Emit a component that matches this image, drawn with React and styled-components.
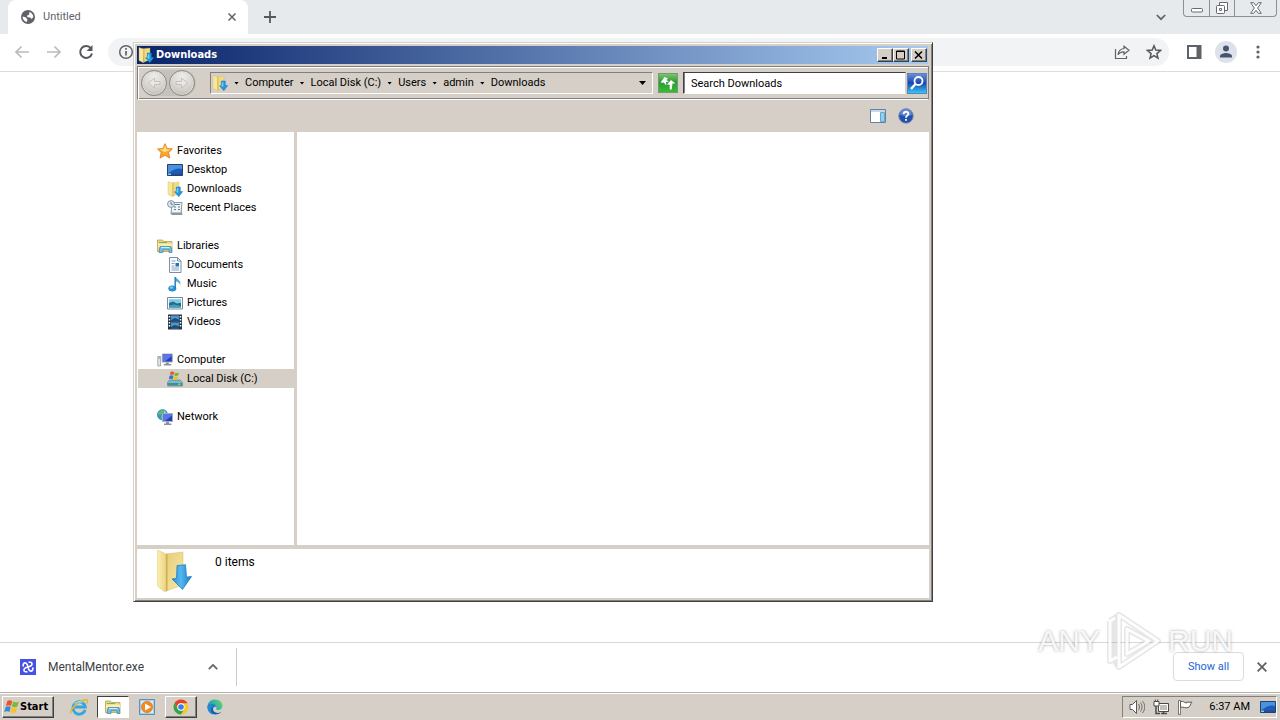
import React from "react";
import styled, { createGlobalStyle, css } from "styled-components";

const GlobalStyle = createGlobalStyle`
  * { box-sizing: border-box; }
  body {
    margin: 0;
    background: #fff;
    color: #000;
    font-family: Roboto, sans-serif;
    font-size: 11px;
    line-height: 16px;
  }
  button, input { font: inherit; color: inherit; margin: 0; }
  a { color: inherit; text-decoration: none; }
  svg { display: block; flex: none; }
`;

const face = "#d5cfc7";
const boldFont = css`
  font-family: "DejaVu Sans Condensed", "DejaVu Sans", sans-serif;
  font-weight: bold;
`;
const raised = css`
  border: 1px solid;
  border-color: #fff #404040 #404040 #fff;
  box-shadow: inset -1px -1px 0 #808080;
`;
const sunken = css`
  border: 1px solid;
  border-color: #808080 #fff #fff #808080;
`;

/* ---------- Desktop and browser ---------- */

const Desktop = styled.div`
  position: relative;
  display: flex;
  flex-direction: column;
  min-height: 100vh;
  overflow: hidden;
`;
const TabStrip = styled.header`
  display: flex;
  height: 34px;
  padding-left: 8px;
  background: #e7eaed;
`;
const Tab = styled.div`
  display: flex;
  align-items: center;
  gap: 7px;
  width: 240px;
  padding: 0 8px 0 12px;
  background: #fff;
  border-radius: 8px 8px 0 0;
  color: #5f6368;
`;
const TabTitle = styled.span`flex: 1;`;
const PlainButton = styled.button`
  display: flex;
  align-items: center;
  justify-content: center;
  width: ${(p) => p.$w || 16}px;
  height: ${(p) => p.$h || 16}px;
  padding: 0;
  border: 0;
  background: none;
  color: #5f6368;
`;
const Spacer = styled.div`flex: 1;`;
const NewTab = styled(PlainButton)`margin: 9px 0 0 14px;`;
const TabSearch = styled(PlainButton)`margin: 9px 14px 0 0;`;
const FrameButtons = styled.div`
  display: flex;
  height: 17px;
  margin-right: 3px;
  border: 1px solid #8c8f93;
  border-top: 0;
  border-radius: 0 0 4px 4px;
`;
const FrameButton = styled(PlainButton)`
  & + & { border-left: 1px solid #8c8f93; }
`;
const BrowserBar = styled.div`
  display: flex;
  align-items: center;
  height: 38px;
  padding: 0 14px 1px;
  border-bottom: 1px solid #dadce0;
  background: #fff;
`;
const NavButtons = styled.div`
  display: flex;
  gap: 16px;
  margin-right: 14px;
`;
const AddressPill = styled.div`
  flex: 1;
  display: flex;
  align-items: center;
  height: 28px;
  padding: 0 7px 0 10px;
  border-radius: 14px;
  background: #f1f3f4;
  color: #5f6368;
`;
const AddressInput = styled.input`
  flex: 1;
  min-width: 0;
  height: 20px;
  border: 0;
  outline: 0;
  background: none;
`;
const PillActions = styled.div`
  display: flex;
  gap: 16px;
`;
const BrowserActions = styled.div`
  display: flex;
  align-items: center;
  gap: 16px;
  margin: 0 0 0 17px;
`;
const Avatar = styled(PlainButton)`
  border-radius: 50%;
  background: #dde1ea;
  margin: 0 -3px;
`;
const PageArea = styled.main`
  flex: 1;
  min-height: 480px;
`;
const DownloadBar = styled.footer`
  display: flex;
  align-items: center;
  height: 50px;
  padding: 0 10px 2px 20px;
  border-top: 1px solid #d5d7da;
  background: #fff;
`;
const DownloadItem = styled.div`
  display: flex;
  align-items: center;
  width: 217px;
  height: 38px;
  gap: 12px;
  padding-right: 15px;
  border-right: 1px solid #c9cbce;
  color: #3c4043;
  font-size: 12px;
`;
const DownloadName = styled.a`flex: 1;`;
const ShowAll = styled.button`
  width: 71px;
  height: 29px;
  margin-right: 10px;
  padding: 0;
  border: 1px solid #dadce0;
  border-radius: 4px;
  background: #fff;
  color: #1a66d2;
`;

/* ---------- Explorer window ---------- */

const Window = styled.section`
  position: absolute;
  top: 42px;
  left: 133px;
  right: 347px;
  bottom: 118px;
  display: flex;
  flex-direction: column;
  padding: 2px 2px 1px 2px;
  border: 1px solid;
  border-color: #d5cfc7 #404040 #404040 #d5cfc7;
  background: ${face};
  box-shadow: inset 1px 1px 0 #fff, inset -1px -1px 0 #808080;
`;
const TitleBar = styled.div`
  display: flex;
  align-items: center;
  gap: 2px;
  height: 18px;
  margin: 1px 2px 2px 1px;
  padding: 0 1px;
  background: linear-gradient(90deg, #0a246a, #a6caf0);
  color: #fff;
`;
const Title = styled.h1`
  flex: 1;
  margin: 0;
  font-size: 11px;
  ${boldFont}
`;
const CaptionGroup = styled.div`
  display: flex;
  & > :last-child { margin-left: 2px; }
`;
const CaptionButton = styled.button`
  display: flex;
  align-items: center;
  justify-content: center;
  width: 16px;
  height: 14px;
  padding: 0;
  background: ${face};
  ${raised}
`;
const Rebar = styled.div`
  display: flex;
  align-items: center;
  height: 34px;
  margin: 0 1px;
  padding: 0 1px 0 3px;
  border: 1px solid;
  border-color: #808080 #808080 #fff #808080;
  box-shadow: inset 1px 1px 0 #fff, inset 0 -1px 0 #808080;
`;
const Travel = styled.div`
  display: flex;
  gap: 2px;
  margin-right: 14px;
  padding-right: 1px;
  border-radius: 13px;
  background: #c5c2bc;
`;
const TravelButton = styled.button`
  display: flex;
  align-items: center;
  justify-content: center;
  width: 26px;
  height: 26px;
  padding: 0;
  border: 1px solid #8a8882;
  border-radius: 50%;
  background: radial-gradient(circle at 50% 25%, #efeeec, #d3d0cb 60%, #b4b1aa);
  box-shadow: inset 0 0 0 1px #dddbd7;
`;
const Breadcrumbs = styled.nav`
  flex: 1;
  display: flex;
  align-items: center;
  height: 22px;
  margin-right: 5px;
  padding: 0 6px 0 1px;
  ${sunken}
`;
const Crumb = styled.a`
  display: flex;
  align-items: center;
  white-space: nowrap;
`;
const CrumbArrow = styled.span`
  width: 5px;
  height: 3px;
  margin: 0 6px;
  background: #000;
  clip-path: polygon(0 0, 100% 0, 50% 100%);
`;
const SearchInput = styled.input`
  width: 223px;
  height: 22px;
  margin-left: 5px;
  padding: 0 7px;
  border: 1px solid;
  border-color: #404040 #d5cfc7 #fff #404040;
  box-shadow: inset 1px 0 0 #808080;
  border-radius: 0;
  background: #fff;
  outline: 0;
  &::placeholder { color: #000; opacity: 1; }
`;
const CommandBar = styled.div`
  display: flex;
  align-items: center;
  justify-content: flex-end;
  gap: 12px;
  height: 32px;
  padding-right: 16px;
`;
const Panes = styled.div`
  flex: 1;
  display: flex;
  gap: 3px;
  min-height: 0;
  margin: 0 1px 4px;
`;
const NavPane = styled.nav`
  display: flex;
  flex-direction: column;
  gap: 19px;
  width: 157px;
  padding: 9px 0 0 1px;
  background: #fff;
`;
const Group = styled.div`
  display: flex;
  flex-direction: column;
`;
const TreeRow = styled.a`
  display: flex;
  align-items: center;
  gap: 4px;
  height: 19px;
  padding-left: ${(p) => (p.$child ? 29 : 19)}px;
  background: ${(p) => (p.$selected ? face : "transparent")};
  white-space: nowrap;
`;
const FilePane = styled.div`
  flex: 1;
  background: #fff;
`;
const DetailsPane = styled.div`
  display: flex;
  gap: 22px;
  height: 49px;
  margin: 0 1px 2px;
  padding: 1px 20px;
  background: #fff;
  font-size: 12px;
`;
const ItemCount = styled.span`padding-top: 4px;`;

/* ---------- Taskbar ---------- */

const Taskbar = styled.div`
  display: flex;
  align-items: center;
  height: 28px;
  padding: 1px 3px 0 2px;
  border-top: 1px solid #b3afa8;
  background: ${face};
  box-shadow: inset 0 1px 0 #fff;
`;
const StartButton = styled.button`
  display: flex;
  align-items: center;
  width: 52px;
  height: 22px;
  margin-right: 9px;
  padding: 0 1px;
  background: ${face};
  && { ${boldFont} }
  ${raised}
`;
const TaskButton = styled.button`
  display: flex;
  align-items: center;
  justify-content: center;
  width: 32px;
  height: 22px;
  margin-right: 2px;
  padding: 0;
  border: 1px solid transparent;
  background: ${face};
  ${(p) => p.$state === "open" && raised}
  ${(p) => p.$state === "active" && css`
    border-color: #404040 #fff #fff #404040;
    background: #fff;
  `}
`;
const Tray = styled.div`
  display: flex;
  align-items: center;
  gap: 8px;
  height: 22px;
  padding: 0 0 0 6px;
  ${sunken}
`;
const Clock = styled.time`
  margin-left: 8px;
  margin-right: 2px;
  white-space: nowrap;
`;

/* ---------- Watermark ---------- */

const Watermark = styled.div`
  position: absolute;
  right: 47px;
  bottom: 47px;
  display: flex;
  align-items: center;
  gap: 6px;
  color: rgba(255, 255, 255, 0.9);
  font-family: "Liberation Sans", sans-serif;
  font-size: 30px;
  line-height: 32px;
  text-shadow: 0 0 3px rgba(80, 80, 80, 0.5);
  pointer-events: none;
`;

/* ---------- Icons ---------- */

const Icon = ({ size = 16, w, h, box = "0 0 16 16", children }) => (
  <svg width={w || size} height={h || size} viewBox={box} fill="none" aria-hidden="true">
    {children}
  </svg>
);

const Cross = ({ size = 8 }) => (
  <Icon size={size} box="0 0 8 8">
    <path d="M.5.5l7 7M7.500.5l-7 7" stroke="#5f6368" strokeWidth="1.500" />
  </Icon>
);
const Globe = () => (
  <Icon>
    <circle cx="8" cy="8" r="7" fill="#5f6368" />
    <path d="M2.700 7.600C4 8 5.400 8 6.300 9l1.100 1.400-.4 2.600c-2.600-.3-4.500-2.600-4.300-5.400zM9.500 2.900c2.400.8 3.700 2.600 3.800 5.100l-1.600 1.900-1.500-1.500-2.800-.2-.3-1.600 2-.8.100-1.300z" fill="#fff" />
  </Icon>
);
const Arrow = ({ flip }) => (
  <Icon>
    <path d={flip ? "M1 8h13M8.500 2.500L14 8l-5.500 5.500" : "M15 8H2M7.500 2.500L2 8l5.500 5.500"} stroke="#b9bbbe" strokeWidth="1.700" />
  </Icon>
);
const Reload = () => (
  <Icon>
    <path d="M13 4.300A6 6 0 1 0 14 9.500" stroke="#55585c" strokeWidth="2" />
    <path d="M14.500 1v6H8.500z" fill="#55585c" />
  </Icon>
);
const Info = () => (
  <Icon>
    <circle cx="8" cy="8" r="6.300" stroke="#5f6368" strokeWidth="1.500" />
    <path d="M8 7v4.500M8 4v1.700" stroke="#5f6368" strokeWidth="1.700" />
  </Icon>
);
const Share = () => (
  <Icon>
    <path d="M1.500 5v9.500h11V12" stroke="#5f6368" strokeWidth="1.200" />
    <path d="M10 2.200l5 4-5 4V7.900c-2.800 0-4.600.8-6 2.700.5-3.400 2.600-5.700 6-6.100z" stroke="#5f6368" strokeWidth="1.200" />
  </Icon>
);
const Star = () => (
  <Icon>
    <path d="M8 1.800l1.800 4.300 4.700.4-3.600 3.100 1.100 4.600L8 11.700l-4 2.500 1.100-4.600-3.600-3.100 4.700-.4z" stroke="#55585c" strokeWidth="1.500" />
  </Icon>
);
const SidePanel = () => (
  <Icon>
    <path d="M2 2h12.500v12H2z" stroke="#5f6368" strokeWidth="2" />
    <path d="M10.500 2h4v12h-4z" fill="#5f6368" />
  </Icon>
);
const Person = () => (
  <Icon>
    <circle cx="8" cy="4.600" r="3" fill="#4b5372" />
    <path d="M2 13.500v-1.600c0-2 4-3 6-3s6 1 6 3v1.600z" fill="#4b5372" />
  </Icon>
);
const Dots = () => (
  <Icon>
    <circle cx="8" cy="3" r="1.600" fill="#5f6368" /><circle cx="8" cy="8" r="1.600" fill="#5f6368" /><circle cx="8" cy="13" r="1.600" fill="#5f6368" />
  </Icon>
);
const Chevron = ({ up }) => (
  <Icon size={10} box="0 0 10 10">
    <path d={up ? "M.8 7.200L5 3l4.200 4.200" : "M.8 3L5 7.200 9.200 3"} stroke="#5f6368" strokeWidth="1.700" />
  </Icon>
);
const FrameMin = () => (
  <Icon w={12} h={12} box="0 0 12 12"><rect x=".5" y="6.500" width="11" height="3.500" rx="1" fill="#fff" stroke="#666a70" /></Icon>
);
const FrameRestore = () => (
  <Icon w={14} h={14} box="0 0 14 14">
    <path d="M4.500 4V1.500h8v8H10" fill="#fff" stroke="#666a70" />
    <rect x="1.500" y="4.500" width="8" height="8" rx="1" fill="#fff" stroke="#666a70" />
    <path d="M4.500 7.500h2v2h-2z" stroke="#666a70" />
  </Icon>
);
const FrameClose = () => (
  <Icon w={12} h={12} box="0 0 12 12">
    <path d="M.7.700h3L6 3.700 8.300.7h3L7.700 6l3.600 5.300h-3L6 8.300l-2.300 3h-3L4.300 6z" fill="#fff" stroke="#666a70" />
  </Icon>
);
const DownloadFolder = () => (
  <Icon>
    <path d="M5 1.800l7-.8v12L6 15z" fill="#f0da83" stroke="#cdb258" strokeWidth=".3" />
    <path d="M1 .5L5.500 2v13.800L1 13.500z" fill="#f8e79a" stroke="#d3b961" strokeWidth=".4" />
    <path d="M5.500 2v13.800l1-.5V1.800z" fill="#d9bb55" />
    <path d="M9.300 6h4v4.500h2.400l-3.900 5.200-4.300-4.900 1.800-.3z" fill="#2498df" stroke="#1776bb" strokeWidth=".5" />
    <path d="M10.300 7h1v5l-2-1z" fill="#71cdf7" />
  </Icon>
);
const LargeDownloadFolder = () => (
  <Icon w={36} h={44} box="0 0 36 44">
    <defs>
      <linearGradient id="flapFill" x1="0" y1="0" x2="1" y2="0"><stop stopColor="#fbf0b5" /><stop offset="1" stopColor="#ecd582" /></linearGradient>
      <linearGradient id="backFill" x1="0" y1="0" x2="1" y2="1"><stop stopColor="#e6cd79" /><stop offset="1" stopColor="#f8eaa8" /></linearGradient>
      <linearGradient id="arrowFill" x1="0" y1="0" x2="1" y2="0"><stop stopColor="#2b8dd8" /><stop offset=".45" stopColor="#55b8f0" /><stop offset="1" stopColor="#1b78c6" /></linearGradient>
    </defs>
    <path d="M9 4l17-2v33L9 41z" fill="url(#backFill)" stroke="#d4b965" strokeWidth=".5" />
    <path d="M0 1.500c0-1 1-1.200 2-.8L9 4v36c0 1.500-1 2-2 1.300L1 36.500c-.7-.5-1-1-1-2z" fill="url(#flapFill)" stroke="#d9c06e" strokeWidth=".5" />
    <path d="M9 4l1.500-.2v37L8 41.500c.7-.3 1-.8 1-1.500z" fill="#cfae53" />
    <path d="M20 15.500l8.500-.8L29.500 27l5-.5L25.500 39.500 15 29l4.500-.8z" fill="url(#arrowFill)" stroke="#1b76bd" strokeWidth=".7" />
  </Icon>
);
const BackArrow = ({ flip }) => (
  <Icon size={14} box="0 0 14 14">
    <path d={flip ? "M1 5.500h5.500V2l6 5-6 5V8.500H1z" : "M13 5.500H7.500V2l-6 5 6 5V8.500H13z"} fill="#e9e8e5" stroke="#b5b2ad" strokeWidth=".7" />
  </Icon>
);
const Refresh = () => (
  <Icon w={20} h={20} box="0 0 20 20">
    <defs><linearGradient id="refreshFill" x1="0" y1="0" x2="0" y2="1"><stop stopColor="#82c76f" /><stop offset=".45" stopColor="#2a9a34" /><stop offset="1" stopColor="#38be35" /></linearGradient></defs>
    <rect x=".5" y=".5" width="19" height="19" fill="url(#refreshFill)" stroke="#719c6c" />
    <path d="M2.500 9.500L6.500 4l3.500 1.500L8.500 7 11 9H8.200v3.500L6 9.700zM17.500 10.500h-3L13.700 16.500h-2v-4.700L9 11.500 13 7z" fill="#fff" />
  </Icon>
);
const SearchGlass = () => (
  <Icon w={20} h={21} box="0 0 20 21">
    <defs><linearGradient id="searchFill" x1="0" y1="0" x2="0" y2="1"><stop stopColor="#6f93dc" /><stop offset=".48" stopColor="#1745b3" /><stop offset="1" stopColor="#37cdf8" /></linearGradient></defs>
    <rect x=".5" y=".5" width="19" height="20" fill="url(#searchFill)" stroke="#5e82b5" />
    <circle cx="11.500" cy="8" r="4" stroke="#fff" strokeWidth="1.800" />
    <path d="M8.500 11l-4.500 5" stroke="#fff" strokeWidth="2.400" />
  </Icon>
);
const PreviewPane = () => (
  <Icon>
    <path d="M.5 1.500h15v13H.5z" fill="#fff" stroke="#5f83a3" />
    <path d="M1 2h14v2H1z" fill="#c7d9e8" />
    <path d="M10.500 4.500h4v9h-4z" fill="#8bd3ef" stroke="#6aa5c6" />
  </Icon>
);
const Help = () => (
  <Icon>
    <circle cx="8" cy="8" r="7.300" fill="#2450ad" stroke="#8796b5" />
    <path d="M2 6.500a6 6 0 0 1 12 0c-3 2-8 2-12 0z" fill="#6287d1" />
    <path d="M5.700 6c.1-3 4.700-2.900 4.700-.2C10.400 7.600 8 7.700 8 9.700M8 11v1.800" stroke="#fff" strokeWidth="1.800" />
  </Icon>
);
const FavStar = () => (
  <Icon>
    <path d="M8 .7l2.200 4.800 5.200.4-3.800 3.700 1.100 5.500L8 12.300l-5 2.800 1.200-5.500L.5 6l5.300-.5z" fill="#f9a72b" stroke="#d9751d" strokeWidth=".8" />
    <path d="M8 2.300l1.500 4 4 .4-6 2.500L3 6.600l3.400-.3z" fill="#ffe079" />
  </Icon>
);
const DesktopIcon = () => (
  <Icon>
    <path d="M.5 2.500h15v11H.5z" fill="#1c5bb9" stroke="#263e70" />
    <path d="M1 3h14v4C9 5 5 9 1 11z" fill="#4c91dc" /><path d="M1 11.500h14V13H1z" fill="#244b93" />
    <path d="M1 11.500h3V13H1z" fill="#76d0de" />
  </Icon>
);
const RecentIcon = () => (
  <Icon>
    <path d="M5 2.500h10l-1 11.500H4z" fill="#f0f4f6" stroke="#8a989f" />
    <path d="M4 12.500h11l.5 2.500H5z" fill="#8a989f" />
    <path d="M8 4.500h5M7 7h2M11 7h2M7 9.500h2M11 9.500h2" stroke="#5e7f96" />
    <circle cx="4" cy="4" r="3.400" fill="#e3ecf0" stroke="#7d929e" /><path d="M4 2v2.300h1.800" stroke="#506777" strokeWidth=".9" />
  </Icon>
);
const LibraryIcon = () => (
  <Icon>
    <path d="M.5 2h5l1 1.500h8.500v10H.5z" fill="#eed47a" stroke="#b79744" strokeWidth=".7" />
    <path d="M1 5.500h14v4H1z" fill="#fbedaa" /><path d="M2 4.500h8" stroke="#67b871" />
    <path d="M3 8.500h11l1 6h-3v-2.700H6V14.500H2z" fill="#74bce4" stroke="#3682b5" strokeWidth=".7" />
    <path d="M4 9.500h8.500" stroke="#c9ecfa" />
  </Icon>
);
const DocumentIcon = () => (
  <Icon>
    <path d="M2.500.5h8l3.500 3.500v11.500H2.500z" fill="#fbfcfe" stroke="#7890a6" />
    <path d="M10.500.5V4H14" stroke="#7890a6" />
    <path d="M4.500 4h4M4.500 6.500h3M4.500 9h3M4.500 11h7.500M4.500 13h7.500" stroke="#7ba4c7" /><path d="M8.500 6H12v3.500H8.500z" fill="#2771af" />
  </Icon>
);
const MusicIcon = () => (
  <Icon>
    <ellipse cx="5.300" cy="12.500" rx="4" ry="3" fill="#278fd3" /><path d="M8.200 12.500V1" stroke="#247fbd" strokeWidth="1.500" />
    <path d="M9 .8c.3 3 5.700 3.300 4.200 8.200C12.600 6.500 10.500 5.800 9 5.500z" fill="#4ca9df" />
    <ellipse cx="4.500" cy="11.700" rx="1.800" ry="1.100" fill="#83cbef" />
  </Icon>
);
const PictureIcon = () => (
  <Icon>
    <path d="M.5 2.500h15v11.500H.5z" fill="#f8fbfc" stroke="#738c9c" /><path d="M2 4.200h12v8.200H2z" fill="#7dcbea" />
    <path d="M2 8l4-1.500 4 2 4-.7v4.600H2z" fill="#286b7d" /><path d="M2 10.500l5-1 7 1.500v1.500H2z" fill="#439fc0" />
  </Icon>
);
const VideoIcon = () => (
  <Icon>
    <path d="M1 .5h14v15H1z" fill="#243544" /><path d="M4 1.500h8v6H4zM4 8.500h8v6H4z" fill="#4c98ce" />
    <path d="M4 6l4-2 4 1.500v2H4zM4 13l3-2 5 1v2.500H4z" fill="#204b77" />
    <path d="M2.500 2v12M13.500 2v12" stroke="#fff" strokeWidth="1.500" strokeDasharray="1.500 1.500" />
  </Icon>
);
const Monitor = ({ x = 0, y = 0 }) => (
  <g transform={`translate(${x} ${y})`}>
    <path d="M.5.5h10v8H.5z" fill="#223cc4" stroke="#a8adb9" />
    <path d="M1 1h9v1.500L3 8H1z" fill="#5778e5" /><path d="M4 9h3v1.500h2.500V12H2v-1.500h2z" fill="#8b919d" />
  </g>
);
const ComputerIcon = () => (
  <Icon><path d="M.8 4.500h2.800V14H.8z" fill="#e4e6ea" stroke="#858c98" strokeWidth=".7" /><path d="M1.500 6h1.500" stroke="#5c9b6a" /><Monitor x={4.800} y={1.500} /></Icon>
);
const NetworkIcon = () => (
  <Icon>
    <circle cx="5.500" cy="5.700" r="5.200" fill="#3595cc" stroke="#287499" strokeWidth=".5" />
    <path d="M2 2.500l3-1.500 2 1.500L5 5 2.500 6 1 5zM4 6l3 1-1 3.500L4 10z" fill="#61bd68" /><path d="M6.500 1.500L9 3 7.500 4.500z" fill="#b7e8e6" /><Monitor x={5} y={4} />
  </Icon>
);
const Flag = () => (
  <Icon>
    <path d="M3.300 2C5 .8 6.500 1 8.200 2L7 7C5.300 6 3.800 6 1.900 7.100z" fill="#ea5426" />
    <path d="M9 2.500c1.900 1 3.700 1 5.900-.1l-1.500 5c-1.900 1-3.600 1-5.600 0z" fill="#79ba38" />
    <path d="M1.600 8c1.700-1.100 3.400-1.100 5.100-.1l-1.300 5C3.900 11.900 2.200 11.900.2 13z" fill="#3d87d6" />
    <path d="M7.500 8.300c1.900 1 3.600 1 5.600 0l-1.400 5c-1.900 1.100-3.600 1-5.500 0z" fill="#f5c22d" />
  </Icon>
);
const DiskIcon = () => (
  <Icon>
    <path d="M2.500 9H13l2.500 2.500v3.500h-15v-3.500z" fill="#70bed0" stroke="#537782" strokeWidth=".6" /><path d="M1 12h14v2.500H1z" fill="#4e8792" /><path d="M11 13.200h2.500" stroke="#8dff64" />
    <path d="M3.500 1C5 .3 6 .5 7.200 1.200L6.500 4C5.300 3.300 4.200 3.300 2.800 4z" fill="#ef5424" /><path d="M8 1.500c1.300.7 2.500.7 4 0l-.8 3c-1.400.7-2.500.6-3.900-.1z" fill="#73b832" />
    <path d="M2.600 4.800C4 4 5.200 4.100 6.400 4.800l-.8 3.400C4.400 7.500 3.200 7.500 1.800 8.200z" fill="#2d7acb" /><path d="M7.100 5.200c1.400.7 2.500.7 4 0l-.8 3.500c-1.500.6-2.600.5-4-.3z" fill="#f4bd20" />
  </Icon>
);
const ExeIcon = () => (
  <Icon>
    <path d="M0 0h16v16H0z" fill="#4950e5" />
    <path d="M3.500 4.500c2-1.500 4 0 4.500 3.500M12.500 11.500c-2 1.500-4 0-4.500-3.500M11.500 3.500c1.500 2 0 4-3.500 4.500M4.500 12.500c-1.500-2 0-4 3.500-4.500M11.500 3.500l-3-.5M12.500 11.500l.5-3M4.500 12.500l3 .5M3.500 4.500L3 7.500" stroke="#fff" strokeWidth="1.600" />
  </Icon>
);
const IeIcon = () => (
  <Icon size={18}>
    <path d="M13.400 10.600A5.500 5.500 0 1 1 13.600 8H4.200" stroke="#36a6df" strokeWidth="2.500" />
    <path d="M1 13.500C-2 11.500 9 1 15 1.500c1.500.3.500 2.500-.5 3.500" stroke="#e5b52c" strokeWidth="1.300" />
    <path d="M4 5.600A5 5 0 0 1 11 4" stroke="#9bdef5" />
  </Icon>
);
const MediaIcon = () => (
  <Icon>
    <path d="M.5.500h15v15H.5z" fill="#a6d1ee" stroke="#5b91bb" /><path d="M2 2h12v12H2z" fill="#d7edf7" />
    <circle cx="8" cy="8" r="5.700" fill="#f58a18" stroke="#bf6a1a" strokeWidth=".5" /><path d="M6 4.500L12 8l-6 3.500z" fill="#fff" />
  </Icon>
);
const ChromeIcon = () => (
  <Icon>
    <circle cx="8" cy="8" r="7.500" fill="#f7c82d" />
    <path d="M1.500 4.300A7.500 7.500 0 0 1 14.500 4.300H8A3.700 3.700 0 0 0 4.700 9.800z" fill="#e44134" />
    <path d="M1.500 4.300A7.500 7.500 0 0 0 8 15.500l3.200-5.700a3.700 3.700 0 0 1-6.400 0z" fill="#2fa451" />
    <circle cx="8" cy="8" r="3.700" fill="#fff" /><circle cx="8" cy="8" r="2.800" fill="#377ee8" />
  </Icon>
);
const EdgeIcon = () => (
  <Icon>
    <defs><linearGradient id="edgeFill" x1="0" y1=".6" x2="1" y2=".2"><stop stopColor="#1595d6" /><stop offset="1" stopColor="#62d468" /></linearGradient></defs>
    <path d="M.5 7.500C1 2.800 4 .5 8 .5c4.500 0 7.500 3 7.500 6.200 0 2.800-2 4.300-4.500 4.300-2.200 0-2-1.400-1.500-2.200C9.500 6 3.500 4.500.5 7.500z" fill="url(#edgeFill)" />
    <path d="M.5 7.500C3 4 8 5 9 7.500c-3 0-4 2.500-2 5 2 1.800 4.700 1.800 7.300.2-3 4.600-13.800 3.800-13.800-5.200z" fill="#1160b5" />
    <path d="M.5 7.500C2.500 5 7 5.500 8.500 7.300 4.500 6.500 2 11 6 15.300 2.400 14.500.3 11.300.5 7.500z" fill="#2389d1" />
  </Icon>
);
const Speaker = () => (
  <Icon>
    <path d="M1 5.500h2.500L7.500 1.500v13l-4-4H1z" fill="#fff" stroke="#5c5a57" /><path d="M9.500 5c1.300 2 1.300 4 0 6M11.500 3.500c2 3 2 6 0 9M13.500 2c3 4 3 8 0 12" stroke="#6f6c68" />
  </Icon>
);
const NetTray = () => (
  <Icon>
    <path d="M5.500 4.500h10v8h-10z" fill="#c2beb8" stroke="#4c4a48" /><path d="M6.500 5.500h8v6h-8z" stroke="#fff" />
    <path d="M8 14.500h6M10.500 12.500v2M3 7v7.500h4" stroke="#4c4a48" strokeWidth="1.500" /><path d="M1 2.500h5V7H1zM2.300 2.500V.5M4.700 2.500V.5" fill="#fff" stroke="#4c4a48" />
  </Icon>
);
const FlagTray = () => (
  <Icon>
    <path d="M1.500 1.500h2v14h-2z" fill="#fff" stroke="#5c5a57" strokeWidth=".8" /><path d="M3.500 2.500c3-1 4 1.500 6 1.500V3.200h5.500c-2 1.500-1 4.300-4 5.300-3 1-4-.8-7.500-.3z" fill="#fff" stroke="#5c5a57" />
  </Icon>
);
const PlayMark = () => (
  <Icon w={56} h={64} box="0 0 56 64">
    <g strokeLinejoin="round">
      <path d="M4 12v40l7-4M4 12l5-3M13 6v52l39-26zM13 6l-4 3v43l4 6M21 20v25l22-13z" stroke="#777" strokeOpacity=".18" strokeWidth="6" />
      <path d="M4 12v40l7-4M4 12l5-3M13 6v52l39-26zM21 20v25l22-13z" stroke="#fff" strokeOpacity=".9" strokeWidth="3" />
    </g>
  </Icon>
);

/* ---------- Content ---------- */

const crumbs = ["Computer", "Local Disk (C:)", "Users", "admin", "Downloads"];
const tree = [
  [["Favorites", FavStar], ["Desktop", DesktopIcon], ["Downloads", DownloadFolder], ["Recent Places", RecentIcon]],
  [["Libraries", LibraryIcon], ["Documents", DocumentIcon], ["Music", MusicIcon], ["Pictures", PictureIcon], ["Videos", VideoIcon]],
  [["Computer", ComputerIcon], ["Local Disk (C:)", DiskIcon]],
  [["Network", NetworkIcon]],
];

function Explorer() {
  return (
    <Window aria-label="Downloads">
      <TitleBar>
        <DownloadFolder />
        <Title>Downloads</Title>
        <CaptionGroup>
          <CaptionButton aria-label="Minimize"><Icon size={10} box="0 0 10 10"><path d="M2 8h5" stroke="#000" strokeWidth="2" /></Icon></CaptionButton>
          <CaptionButton aria-label="Maximize"><Icon size={10} box="0 0 10 10"><path d="M.5 1h8v8h-8zM0 1.500h9" stroke="#000" /></Icon></CaptionButton>
          <CaptionButton aria-label="Close"><Icon size={10} box="0 0 10 10"><path d="M1 1.500l7 7M8 1.500l-7 7" stroke="#000" strokeWidth="1.500" /></Icon></CaptionButton>
        </CaptionGroup>
      </TitleBar>
      <Rebar>
        <Travel>
          <TravelButton aria-label="Back"><BackArrow /></TravelButton>
          <TravelButton aria-label="Forward"><BackArrow flip /></TravelButton>
        </Travel>
        <Breadcrumbs aria-label="Path">
          <DownloadFolder />
          {crumbs.map((name) => (
            <Crumb href="#" key={name}><CrumbArrow />{name}</Crumb>
          ))}
          <Spacer />
          <PlainButton $w={7} aria-label="Previous locations">
            <Icon w={7} h={4} box="0 0 7 4"><path d="M0 0h7L3.500 4z" fill="#000" /></Icon>
          </PlainButton>
        </Breadcrumbs>
        <PlainButton $w={20} $h={22} aria-label="Refresh"><Refresh /></PlainButton>
        <SearchInput aria-label="Search Downloads" placeholder="Search Downloads" />
        <PlainButton $w={21} $h={22} aria-label="Search"><SearchGlass /></PlainButton>
      </Rebar>
      <CommandBar>
        <PlainButton aria-label="Preview pane"><PreviewPane /></PlainButton>
        <PlainButton aria-label="Help"><Help /></PlainButton>
      </CommandBar>
      <Panes>
        <NavPane aria-label="Folders">
          {tree.map((group) => (
            <Group key={group[0][0]}>
              {group.map(([name, Glyph], i) => (
                <TreeRow href="#" key={name} $child={i > 0} $selected={name === "Local Disk (C:)"}>
                  <Glyph />{name}
                </TreeRow>
              ))}
            </Group>
          ))}
        </NavPane>
        <FilePane />
      </Panes>
      <DetailsPane>
        <LargeDownloadFolder />
        <ItemCount>0 items</ItemCount>
      </DetailsPane>
    </Window>
  );
}

export default function App() {
  return (
    <Desktop>
      <GlobalStyle />
      <TabStrip>
        <Tab>
          <Globe />
          <TabTitle>Untitled</TabTitle>
          <PlainButton aria-label="Close tab"><Cross /></PlainButton>
        </Tab>
        <NewTab aria-label="New tab"><Icon size={12} box="0 0 12 12"><path d="M6 0v12M0 6h12" stroke="#55585c" strokeWidth="1.800" /></Icon></NewTab>
        <Spacer />
        <TabSearch aria-label="Search tabs"><Chevron /></TabSearch>
        <FrameButtons>
          <FrameButton $w={25} aria-label="Minimize browser"><FrameMin /></FrameButton>
          <FrameButton $w={25} aria-label="Restore browser"><FrameRestore /></FrameButton>
          <FrameButton $w={42} aria-label="Close browser"><FrameClose /></FrameButton>
        </FrameButtons>
      </TabStrip>
      <BrowserBar>
        <NavButtons>
          <PlainButton aria-label="Back"><Arrow /></PlainButton>
          <PlainButton aria-label="Forward"><Arrow flip /></PlainButton>
          <PlainButton aria-label="Reload"><Reload /></PlainButton>
        </NavButtons>
        <AddressPill>
          <Info />
          <AddressInput aria-label="Address" />
          <PillActions>
            <PlainButton aria-label="Share"><Share /></PlainButton>
            <PlainButton aria-label="Bookmark"><Star /></PlainButton>
          </PillActions>
        </AddressPill>
        <BrowserActions>
          <PlainButton aria-label="Side panel"><SidePanel /></PlainButton>
          <Avatar $w={22} $h={22} aria-label="Profile"><Person /></Avatar>
          <PlainButton aria-label="Menu"><Dots /></PlainButton>
        </BrowserActions>
      </BrowserBar>
      <PageArea />
      <DownloadBar>
        <DownloadItem>
          <ExeIcon />
          <DownloadName href="#">MentalMentor.exe</DownloadName>
          <PlainButton aria-label="Download options"><Chevron up /></PlainButton>
        </DownloadItem>
        <Spacer />
        <ShowAll>Show all</ShowAll>
        <PlainButton aria-label="Close downloads bar"><Cross size={10} /></PlainButton>
      </DownloadBar>
      <Taskbar>
        <StartButton><Flag />Start</StartButton>
        <TaskButton aria-label="Internet Explorer"><IeIcon /></TaskButton>
        <TaskButton aria-label="Windows Explorer" $state="active"><LibraryIcon /></TaskButton>
        <TaskButton aria-label="Media Player"><MediaIcon /></TaskButton>
        <TaskButton aria-label="Chrome" $state="open"><ChromeIcon /></TaskButton>
        <TaskButton aria-label="Edge"><EdgeIcon /></TaskButton>
        <Spacer />
        <Tray>
          <Speaker />
          <NetTray />
          <FlagTray />
          <Clock>6:37 AM</Clock>
          <DesktopIcon />
        </Tray>
      </Taskbar>
      <Explorer />
      <Watermark><span>ANY</span><PlayMark /><span>RUN</span></Watermark>
    </Desktop>
  );
}
